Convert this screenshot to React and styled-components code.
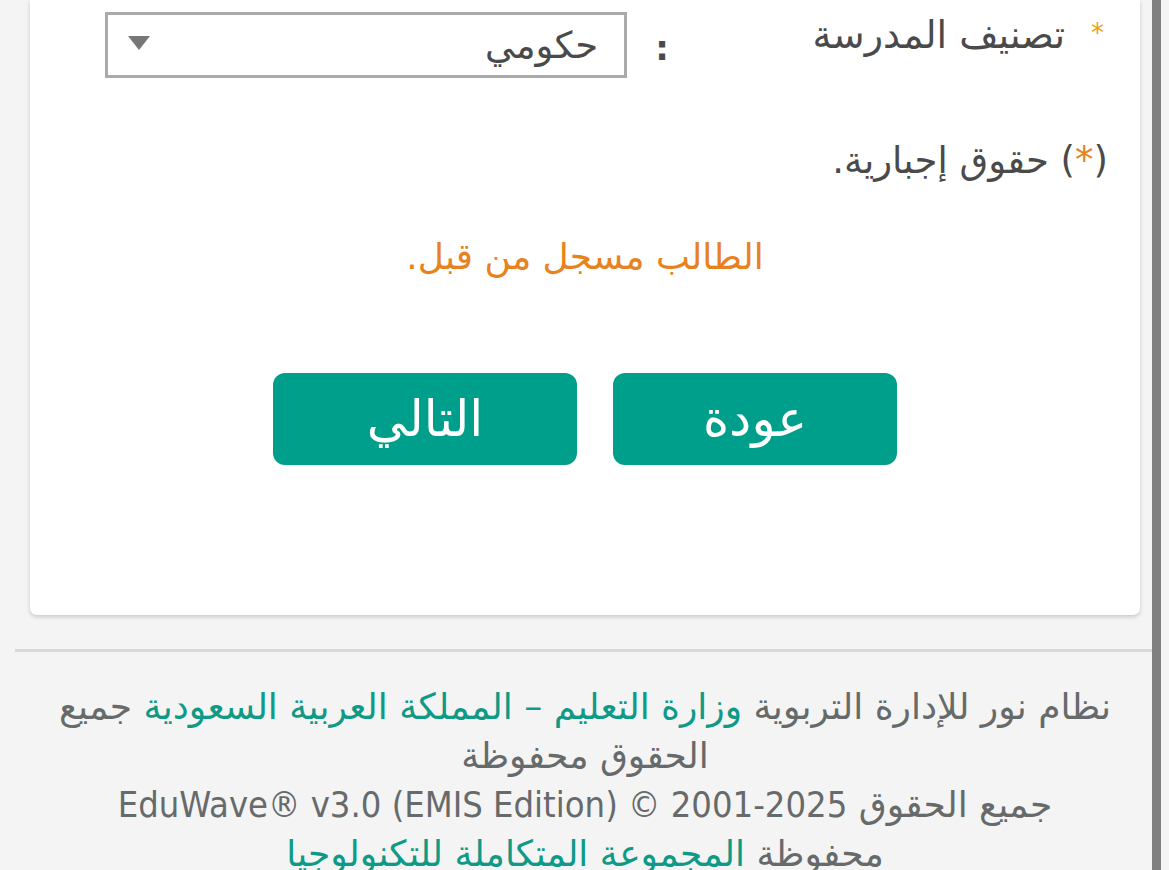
import React from 'react';
import styled, { createGlobalStyle } from 'styled-components';

const GlobalStyle = createGlobalStyle`
  html, body {
    margin: 0;
    padding: 0;
    background: #f4f4f4;
  }
  body {
    direction: rtl;
    font-family: "DejaVu Sans", "Noto Sans", sans-serif;
    color: #4a4a4a;
  }
`;

const Page = styled.div`
  padding: 0 29px 0 30px;
`;

const Card = styled.div`
  background: #fff;
  border-radius: 0 0 7px 7px;
  box-shadow: 0 2px 4px rgba(0, 0, 0, 0.18);
  padding: 12px 30px 150px 30px;
`;

const FieldRow = styled.div`
  display: grid;
  grid-template-columns: 45px 381px 44px 13px 522px;
  align-items: start;
`;

const Star = styled.span`
  color: #f0a010;
  font-size: 26px;
  padding-top: 6px;
  text-align: right;
  padding-right: 6px;
`;

const Label = styled.label`
  font-size: 38px;
  line-height: 46px;
  white-space: nowrap;
`;

const Colon = styled.span`
  font-size: 34px;
  font-weight: bold;
  text-align: center;
  padding-top: 16px;
`;

const Select = styled.div`
  grid-column: 5;
  height: 66px;
  box-sizing: border-box;
  border: 3px solid #aaaaaa;
  display: flex;
  align-items: center;
  justify-content: space-between;
  padding: 0 26px 0 20px;
  font-size: 37px;
  color: #4a4a4a;
`;

const Caret = styled.span`
  width: 0;
  height: 0;
  border-left: 11px solid transparent;
  border-right: 11px solid transparent;
  border-top: 14px solid #777;
  margin-bottom: 4px;
`;

const Note = styled.p`
  margin: 60px 0 0 0;
  font-size: 37px;
  line-height: 46px;
  padding-right: 2px;
`;

const Mark = styled.span`
  color: ${p => p.$tone === 'orange' ? '#e8821e' : '#0e9a86'};
`;

const Message = styled.p`
  margin: 50px 0 0 0;
  text-align: center;
  color: #e8821e;
  font-size: 36px;
  line-height: 46px;
`;

const Actions = styled.div`
  display: flex;
  justify-content: center;
  gap: 36px;
  margin-top: 93px;
`;

const Button = styled.button`
  width: ${p => p.$w}px;
  height: 92px;
  background: #009f8b;
  border: none;
  border-radius: 12px;
  color: #fff;
  font-family: inherit;
  font-size: 50px;
  padding: 0;
`;

const Footer = styled.footer`
  margin: 34px 14px 0 15px;
  border-top: 3px solid #d8d8d8;
  padding: 30px 30px 0;
  text-align: center;
  font-size: 36px;
  line-height: 49px;
  color: #666a6b;
`;

const FooterLine = styled.p`
  margin: 0;
`;

const Version = styled.bdi`
  font-family: "DejaVu Sans Condensed", "DejaVu Sans", sans-serif;
`;

const ScrollBar = styled.div`
  position: fixed;
  top: 0;
  bottom: 0;
  left: 1152px;
  width: 9px;
  background: #808080;
`;

export default function App() {
  return (
    <>
      <GlobalStyle />
      <Page>
        <Card>
          <FieldRow>
            <Star>*</Star>
            <Label>تصنيف المدرسة</Label>
            <Colon>:</Colon>
            <Select>
              <span>حكومي</span>
              <Caret />
            </Select>
          </FieldRow>
          <Note>(<Mark $tone="orange">*</Mark>) حقوق إجبارية.</Note>
          <Message>الطالب مسجل من قبل.</Message>
          <Actions>
            <Button $w={284}>عودة</Button>
            <Button $w={304}>التالي</Button>
          </Actions>
        </Card>
      </Page>
      <Footer>
        <FooterLine>
          نظام نور للإدارة التربوية <Mark>وزارة التعليم – المملكة العربية السعودية</Mark> جميع الحقوق محفوظة
        </FooterLine>
        <FooterLine>
          جميع الحقوق <Version dir="ltr">EduWave® v3.0 (EMIS Edition) © 2001-2025</Version> محفوظة{'\u00A0'}<Mark>المجموعة{'\u00A0'}المتكاملة للتكنولوجيا</Mark>
        </FooterLine>
      </Footer>
      <ScrollBar />
    </>
  );
}
